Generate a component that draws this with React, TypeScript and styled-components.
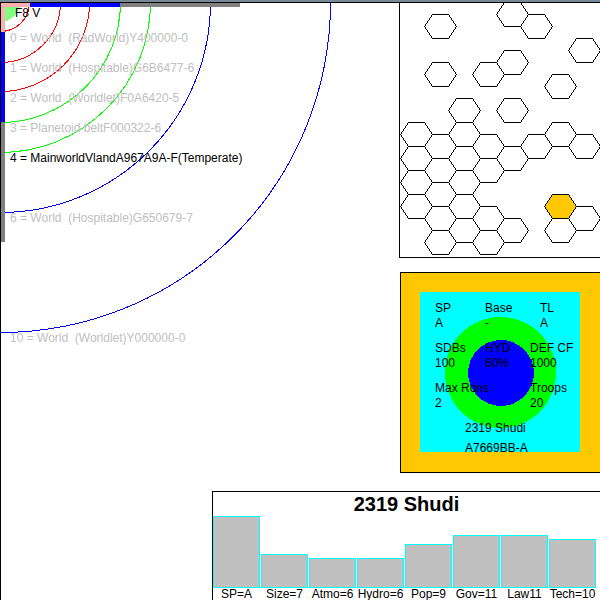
import React from "react";
import styled, { createGlobalStyle } from "styled-components";

const GlobalStyle = createGlobalStyle`
  * { box-sizing: border-box; }
  body {
    margin: 0;
    background: #fff;
    color: #000;
    font: 12px/15px "Liberation Sans", Arial, sans-serif;
    overflow: hidden;
  }
`;

const Page = styled.main`
  display: flex;
  flex-direction: column;
  height: 100vh;
  overflow: hidden;
`;

const TopStrip = styled.div`
  flex: none;
  height: 2px;
  background: #778899;
`;

const Desk = styled.div`
  flex: 1;
  min-height: 0;
  display: grid;
  grid-template-columns: minmax(0, 1fr) 187px 201px;
  grid-template-rows: 256px 201px minmax(0, 1fr);
`;

const OrbitPanel = styled.section`
  grid-column: 1 / 4;
  grid-row: 1 / 4;
  position: relative;
  border: solid #000;
  border-width: 1px 0 0 1px;
`;

const OrbitDrawing = styled.svg`
  position: absolute;
  top: 0;
  left: 0;
`;

const StarLabel = styled.h2`
  position: relative;
  margin: 0;
  padding-left: 14px;
  font-size: 12px;
  font-weight: normal;
  line-height: 20px;
`;

const OrbitList = styled.ul`
  position: relative;
  display: grid;
  grid-auto-rows: 30px;
  margin: 0;
  padding: 0 0 0 9px;
  list-style: none;
`;

const OrbitItem = styled.li<{ $orbit: number; $main?: boolean }>`
  grid-row: ${(p) => p.$orbit + 1};
  line-height: 30px;
  white-space: pre;
  color: ${(p) => (p.$main ? "#000" : "#c0c0c0")};
`;

const SubsectorPanel = styled.section`
  grid-column: 3;
  grid-row: 1;
  position: relative;
  overflow: hidden;
  background: #fff;
  border: solid #000;
  border-width: 1px 0 1px 1px;
`;

const HexDrawing = styled.svg`
  display: block;
`;

const WorldPanel = styled.section`
  grid-column: 3;
  grid-row: 2;
  position: relative;
  margin: 14px 0 -14px 1px;
  padding: 19px;
  background: #ffc800;
  border: solid #000;
  border-width: 1px 0 1px 1px;
`;

const WorldSquare = styled.div`
  position: relative;
  width: 160px;
  height: 160px;
  background: #0ff;
`;

const PlanetDrawing = styled.svg`
  position: absolute;
  top: 0;
  left: 0;
`;

const StatGrid = styled.dl`
  position: relative;
  display: grid;
  grid-template-columns: 50px 45px 50px;
  grid-template-rows: 40px 40px 37px;
  margin: 0;
  padding: 9px 0 0 15px;
  white-space: nowrap;
`;

const Stat = styled.div<{ $column: number; $indent?: boolean }>`
  grid-column: ${(p) => p.$column};
  padding-left: ${(p) => (p.$indent ? "10px" : "0")};
  dt, dd { margin: 0; }
`;

const WorldCaption = styled.p`
  position: relative;
  margin: 0;
  padding-left: 45px;
  line-height: 20px;
`;

const ChartPanel = styled.section`
  grid-column: 2 / 4;
  grid-row: 3;
  position: relative;
  display: flex;
  flex-direction: column;
  margin-top: 32px;
  overflow: hidden;
  background: #fff;
  border: solid #000;
  border-width: 1px 0 0 1px;
`;

const ChartTitle = styled.h1`
  margin: 0;
  font-size: 20px;
  line-height: 24px;
  text-align: center;
`;

const Bars = styled.div`
  display: grid;
  grid-template-columns: repeat(8, 47px);
  column-gap: 1px;
`;

const Column = styled.figure`
  display: flex;
  flex-direction: column;
  align-items: center;
  justify-content: flex-end;
  height: 84px;
  margin: 0;
`;

const Bar = styled.div<{ $height: number }>`
  flex: none;
  width: 100%;
  height: ${(p) => p.$height}px;
  background: #c0c0c0;
  border: 1px solid #0ff;
`;

const BarLabel = styled.figcaption`
  flex: none;
  line-height: 12px;
  white-space: nowrap;
`;

const orbits = [
  { n: 0, text: "0 = World  (RadWorld)Y400000-0" },
  { n: 1, text: "1 = World  (Hospitable)G6B6477-6" },
  { n: 2, text: "2 = World  (Worldlet)F0A6420-5" },
  { n: 3, text: "3 = Planetoid beltF000322-6" },
  { n: 4, text: "4 = MainworldVlandA967A9A-F(Temperate)", main: true },
  { n: 6, text: "6 = World  (Hospitable)G650679-7" },
  { n: 10, text: "10 = World  (Worldlet)Y000000-0" },
];

const rings = [
  { r: 29, color: "#f00" },
  { r: 60, color: "#f00" },
  { r: 89, color: "#f00" },
  { r: 120, color: "#0f0" },
  { r: 150, color: "#0f0" },
  { r: 210, color: "#00f" },
  { r: 330, color: "#00f" },
];

const hexColumns: number[][] = [
  [134, 158, 182, 206],
  [26, 74, 146, 170, 194, 218, 242],
  [110, 134, 158, 182, 206, 230],
  [74, 146, 170, 218, 242],
  [14, 62, 110, 158, 230],
  [26, 146],
  [86, 134, 206, 230],
  [50, 146, 218],
];

const stats = [
  { label: "SP", value: "A", column: 1 },
  { label: "Base", value: "-", column: 2 },
  { label: "TL", value: "A", column: 3, indent: true },
  { label: "SDBs", value: "100", column: 1 },
  { label: "HYD", value: "60%", column: 2 },
  { label: "DEF CF", value: "1000", column: 3 },
  { label: "Max Rons", value: "2", column: 1 },
  { label: "Troops", value: "20", column: 3 },
];

const bars = [
  { label: "SP=A", height: 72 },
  { label: "Size=7", height: 34 },
  { label: "Atmo=6", height: 30 },
  { label: "Hydro=6", height: 30 },
  { label: "Pop=9", height: 44 },
  { label: "Gov=11", height: 53 },
  { label: "Law11", height: 53 },
  { label: "Tech=10", height: 49 },
];

function Orbits() {
  return (
    <OrbitPanel>
      <OrbitDrawing width="340" height="340" viewBox="1 1 340 340" shapeRendering="crispEdges" aria-hidden="true">
        <circle cx="0" cy="0" r="20" fill="#80ff80" />
        {rings.map((ring) => (
          <circle key={ring.r} cx="0.5" cy="0.5" r={ring.r} fill="none" stroke={ring.color} />
        ))}
        <path d="M1 1H240V5H1Z M1 1H5V240H1Z" fill="#808080" />
        <path d="M1 1H120V5H1Z M1 1H5V120H1Z" fill="#00f" />
        <path d="M1 1H30V5H1Z M1 1H5V30H1Z" fill="#ffafaf" />
      </OrbitDrawing>
      <StarLabel>F8 V</StarLabel>
      <OrbitList>
        {orbits.map((o) => (
          <OrbitItem key={o.n} $orbit={o.n} $main={o.main}>{o.text}</OrbitItem>
        ))}
      </OrbitList>
    </OrbitPanel>
  );
}

function Subsector() {
  return (
    <SubsectorPanel aria-label="Subsector map">
      <HexDrawing width="200" height="254" viewBox="0 3 200 254" shapeRendering="crispEdges">
        {hexColumns.map((column, i) =>
          column.map((y) => (
            <path
              key={`${i}-${y}`}
              d={`M${i * 24 + 0.5} ${y + 0.5}l8 -12h16l8 12l-8 12h-16z`}
              fill={i === 6 && y === 206 ? "#ffc800" : "none"}
              stroke="#000"
            />
          ))
        )}
      </HexDrawing>
    </SubsectorPanel>
  );
}

function World() {
  return (
    <WorldPanel>
      <WorldSquare>
        <PlanetDrawing width="160" height="160" shapeRendering="crispEdges" aria-hidden="true">
          <circle cx="80.5" cy="80.5" r="55.5" fill="#0f0" />
          <circle cx="81" cy="81" r="33" fill="#00f" />
        </PlanetDrawing>
        <StatGrid>
          {stats.map((s) => (
            <Stat key={s.label} $column={s.column} $indent={s.indent}>
              <dt>{s.label}</dt>
              <dd>{s.value}</dd>
            </Stat>
          ))}
        </StatGrid>
        <WorldCaption>2319 Shudi</WorldCaption>
        <WorldCaption>A7669BB-A</WorldCaption>
      </WorldSquare>
    </WorldPanel>
  );
}

function Profile() {
  return (
    <ChartPanel>
      <ChartTitle>2319 Shudi</ChartTitle>
      <Bars>
        {bars.map((b) => (
          <Column key={b.label}>
            <Bar $height={b.height} />
            <BarLabel>{b.label}</BarLabel>
          </Column>
        ))}
      </Bars>
    </ChartPanel>
  );
}

export default function App() {
  return (
    <Page>
      <GlobalStyle />
      <TopStrip />
      <Desk>
        <Orbits />
        <Subsector />
        <World />
        <Profile />
      </Desk>
    </Page>
  );
}
